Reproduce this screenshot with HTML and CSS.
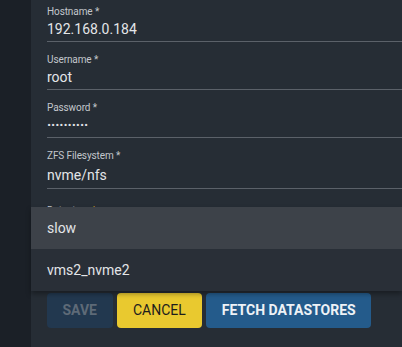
FILE: index.html
```html
<!DOCTYPE html>
<html lang="en">
<head>
<meta charset="utf-8">
<title>Datastore form</title>
<link rel="stylesheet" href="styles.css">
</head>
<body>
<div class="app">
  <aside class="sidebar"></aside>
  <main class="panel">
    <div class="field">
      <label class="field-label">Hostname *</label>
      <div class="field-value">192.168.0.184</div>
    </div>
    <div class="field">
      <label class="field-label">Username *</label>
      <div class="field-value">root</div>
    </div>
    <div class="field">
      <label class="field-label">Password *</label>
      <div class="field-value field-value--password">··········</div>
    </div>
    <div class="field field--select">
      <label class="field-label">ZFS Filesystem *</label>
      <div class="field-value">nvme/nfs</div>
    </div>
    <div class="field field--datastore">
      <label class="field-label">Datastore <span class="required">*</span></label>
      <div class="field-value"></div>
    </div>
    <div class="actions">
      <button class="btn btn--save" disabled>SAVE</button>
      <button class="btn btn--cancel">CANCEL</button>
      <button class="btn btn--fetch">FETCH DATASTORES</button>
    </div>
    <ul class="menu">
      <li class="menu-item menu-item--active">slow</li>
      <li class="menu-item">vms2_nvme2</li>
    </ul>
  </main>
</div>
</body>
</html>
```
FILE: styles.css
```css
html, body {
  margin: 0;
  padding: 0;
  width: 402px;
  height: 347px;
  overflow: hidden;
  background: #262d35;
  font-family: Roboto, "Liberation Sans", Arial, sans-serif;
}

.app {
  display: flex;
  height: 347px;
}

.sidebar {
  width: 31px;
  flex: none;
  background: #1b2027;
}

.panel {
  position: relative;
  flex: 1;
  padding: 5.5px 0 0 16px;
  background: #262d35;
}

.field {
  display: flex;
  flex-direction: column;
  margin-bottom: 11.5px;
}

.field-label {
  display: block;
  font-size: 10px;
  line-height: 12px;
  height: 12px;
  color: #c3c7cc;
  letter-spacing: -0.1px;
}

.required {
  color: #e6b91e;
}

.field-value {
  margin-top: 1px;
  font-size: 14px;
  line-height: 20px;
  height: 20px;
  padding-bottom: 2.5px;
  color: #e3e5e8;
  border-bottom: 1px solid #5b6169;
}

.field-value--password {
  font-weight: 700;
  letter-spacing: -0.1px;
}

.field--select .field-value {
  padding-top: 2.5px;
}

.field--datastore {
  margin-top: 16px;
}

.actions {
  display: flex;
  gap: 4px;
  margin-top: 51.5px;
}

.btn {
  height: 35px;
  padding: 0 16px;
  border: none;
  border-radius: 4px;
  font-family: Roboto, "Liberation Sans", Arial, sans-serif;
  font-size: 14px;
  font-weight: 700;
  letter-spacing: 0;
}

.btn--save {
  padding: 0 15.5px;
  background: #22384f;
  color: #5e6a77;
}

.btn--cancel {
  padding: 0 16.5px;
  background: #e9c92f;
  color: #1d1d1d;
  font-weight: 400;
}

.btn--fetch {
  padding: 0 15.5px;
  background: #245b8b;
  color: #eef2f6;
}

.menu {
  position: absolute;
  top: 207px;
  left: 0;
  right: 0;
  margin: 0;
  padding: 0;
  list-style: none;
  background: #292f37;
  box-shadow: 0 3px 5px rgba(0, 0, 0, 0.35);
}

.menu-item {
  height: 42px;
  line-height: 42px;
  padding-left: 16px;
  font-size: 14px;
  color: #e3e5e8;
}

.menu-item--active {
  background: #3d4249;
}
```
